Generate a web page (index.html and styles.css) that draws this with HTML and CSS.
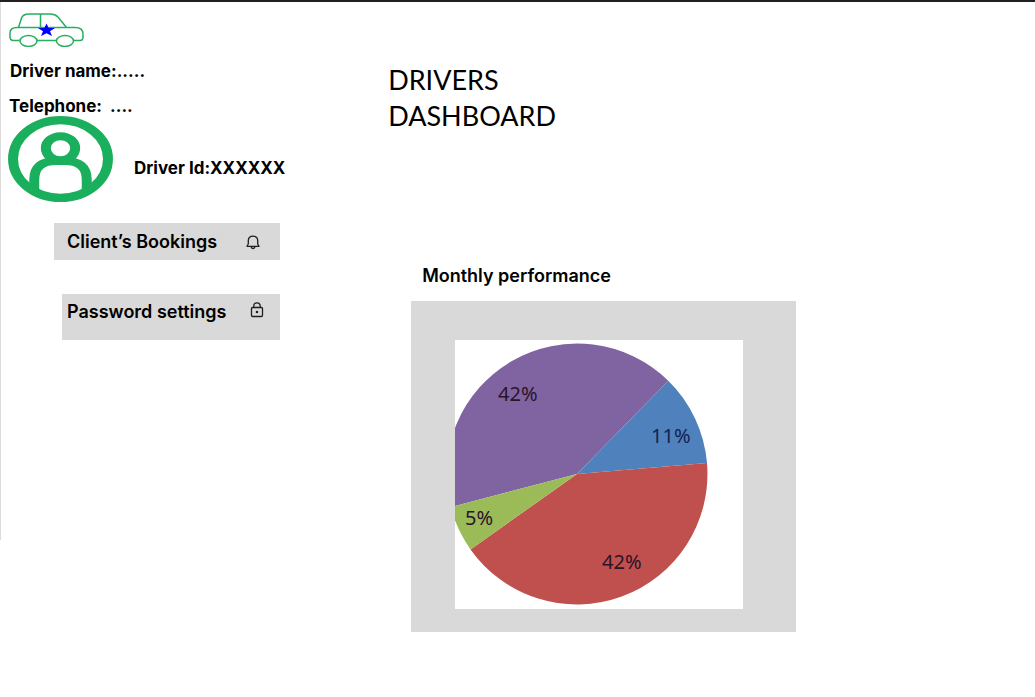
FILE: index.html
```html
<!DOCTYPE html>
<html lang="en">
<head>
<meta charset="utf-8">
<meta name="viewport" content="width=device-width, initial-scale=1">
<title>Drivers Dashboard</title>
<link rel="stylesheet" href="styles.css">
</head>
<body>
<div class="page">
  <aside class="sidebar">
    <svg class="logo" viewBox="0 0 75 34" aria-hidden="true">
      <g fill="none" stroke="#27ae60" stroke-width="1.5">
        <path d="M10.500 27.500H4.500Q1 27.500 1 24V20Q1 14.500 8 14.500H66Q74 14.500 74 21V24Q74 27.500 71 27.500H64.500M47 27.500H28"/>
        <path d="M9.500 14.500L12.500 5Q14 1 20 1H41Q46 1 49 4L57.500 14.500M31.500 1V14.500"/>
        <ellipse cx="19.500" cy="28" rx="8.500" ry="5.400"/>
        <ellipse cx="56" cy="28" rx="8.500" ry="5.400"/>
      </g>
      <path fill="#0000ff" d="M37.500 10.500L39.600 15H46L41 18.200L43 23L37.500 20.200L32 23L34 18.200L29 15H35.400Z"/>
    </svg>
    <p class="label name">Driver name:.....</p>
    <p class="label phone">Telephone:&nbsp; ....</p>
    <div class="profile">
      <svg class="avatar" viewBox="0 0 100 100" preserveAspectRatio="none" aria-hidden="true">
        <g fill="none" stroke="#1aaf5d" stroke-width="9.5">
          <circle cx="50" cy="50" r="45.200"/>
          <circle cx="50" cy="37.500" r="14"/>
          <path d="M25 86V74Q25 52.300 46 52.300H54Q75 52.300 75 74V86"/>
        </g>
      </svg>
      <p class="label driver-id">Driver Id:XXXXXX</p>
    </div>
    <nav class="menu">
      <button class="heading item bookings" type="button">Client’s Bookings
        <svg class="bell" viewBox="0 0 16 16" aria-hidden="true"><path fill="none" stroke="#1e1e1e" stroke-width="1.300" stroke-linejoin="round" d="M3.300 10V6.500C3.300 3.700 5.200 2.200 8 2.200S12.700 3.700 12.700 6.500V10L14 12.300H2L3.300 10M6 12.500Q6.300 14.500 8 14.500T10 12.500"/></svg>
      </button>
      <button class="heading item password" type="button">Password settings
        <svg class="lock" viewBox="0 0 16 16" aria-hidden="true"><g fill="none" stroke="#1e1e1e" stroke-width="1.300"><rect x="2.500" y="5.500" width="11" height="9" rx="1"/><path d="M4.800 5.500V4Q4.800 0.800 8 0.800T11.200 4V5.500"/></g><circle cx="8" cy="10" r="1.300" fill="#1e1e1e"/></svg>
      </button>
    </nav>
  </aside>
  <main class="main">
    <h1 class="title">DRIVERS<br>DASHBOARD</h1>
    <h2 class="heading subtitle">Monthly performance</h2>
    <section class="card">
      <svg class="chart" viewBox="0 0 288 269" role="img" aria-label="Monthly performance pie chart">
        <rect width="288" height="269" fill="#fff"/>
        <path fill="#8064a2" d="M122 134L-4.200 167.100A130.500 130.500 0 0 1 213.300 40.800Z"/>
        <path fill="#4f81bd" d="M122 134L213.300 40.800A130.500 130.500 0 0 1 252 123Z"/>
        <path fill="#c0504d" d="M122 134L252 123A130.500 130.500 0 0 1 15.500 209.400Z"/>
        <path fill="#9bbb59" d="M122 134L15.500 209.400A130.500 130.500 0 0 1 -4.200 167.100Z"/>
        <g class="chart-text">
          <text x="43" y="61">42%</text>
          <text x="196" y="103" class="navy">11%</text>
          <text x="10" y="185">5%</text>
          <text x="147" y="229">42%</text>
        </g>
      </svg>
    </section>
  </main>
</div>
</body>
</html>
```
FILE: styles.css
```css
* {
  box-sizing: border-box;
}

body {
  margin: 0;
  background: #fff;
  color: #000;
  font-family: Inter, "Liberation Sans", sans-serif;
}

.page {
  display: grid;
  grid-template-columns: 3fr 5fr;
  align-items: start;
  border-top: 2px solid #231f20;
}

.sidebar {
  min-height: 538px;
  padding: 11px 7px;
  border-left: 1px solid #dcdcdc;
}

.logo {
  display: block;
  width: 75px;
  height: 34px;
  margin-left: 1px;
}

.label {
  margin: 0;
  font-size: 17px;
  font-weight: 700;
  line-height: 20px;
}

.heading {
  margin: 0;
  font-size: 18px;
  font-weight: 600;
  line-height: 20px;
}

.name {
  margin-top: 14px;
  padding-left: 2px;
}

.phone {
  margin-top: 15px;
  padding-left: 1px;
}

.profile {
  display: flex;
  align-items: center;
  gap: 21px;
}

.avatar {
  width: 105px;
  height: 86px;
}

.driver-id {
  padding-top: 18px;
}

.menu {
  display: flex;
  flex-direction: column;
  align-items: flex-start;
  gap: 34px;
  margin-top: 21px;
  padding-left: 46px;
}

.item {
  display: flex;
  align-items: flex-start;
  justify-content: space-between;
  border: 0;
  background: #d9d9d9;
  color: #000;
  font-family: inherit;
  text-align: left;
  cursor: pointer;
}

.item svg {
  width: 16px;
  height: 16px;
}

.bookings {
  align-items: center;
  width: 226px;
  padding: 9px 19px 8px 13px;
}

.password {
  width: 218px;
  margin-left: 8px;
  padding: 8px 15px 18px 5px;
}

.main {
  padding: 60px 0 40px;
}

.title {
  margin: 0;
  font-family: Lato, sans-serif;
  font-size: 27px;
  font-weight: 400;
  line-height: 36px;
}

.subtitle {
  margin: 132px 0 15px 34px;
}

.card {
  max-width: 385px;
  margin-left: 23px;
  padding: 39px 53px 23px 44px;
  background: #d9d9d9;
}

.chart {
  display: block;
  width: 100%;
}

.chart-text {
  fill: #2b1428;
  font-family: "Noto Sans", sans-serif;
  font-size: 20px;
}

.navy {
  fill: #14234f;
}
```
